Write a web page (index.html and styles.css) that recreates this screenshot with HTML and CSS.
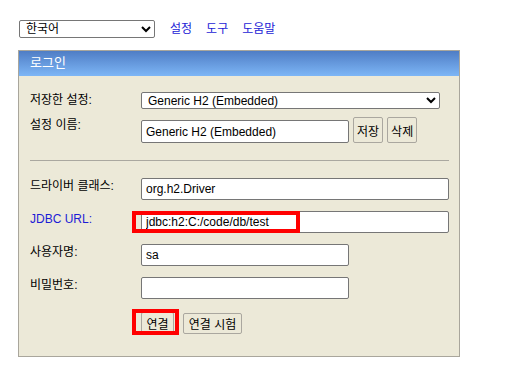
FILE: index.html
```html
<!DOCTYPE html>
<html lang="ko">
<head>
    <meta charset="UTF-8">
    <meta name="viewport" content="width=device-width, initial-scale=1.0">
    <title>H2 Console</title>
    <link rel="stylesheet" href="styles.css">
</head>
<body>
    <div class="toolbar">
        <select class="lang-select">
            <option>한국어</option>
        </select>
        <a href="#" class="top-link">설정</a>
        <a href="#" class="top-link">도구</a>
        <a href="#" class="top-link">도움말</a>
    </div>

    <div class="login">
        <div class="login-head">로그인</div>
        <div class="login-body">
            <div class="row">
                <span class="label">저장한 설정:</span>
                <select class="setting-select">
                    <option>Generic H2 (Embedded)</option>
                </select>
            </div>
            <div class="row row-name">
                <span class="label">설정 이름:</span>
                <input type="text" class="field short" value="Generic H2 (Embedded)">
                <button class="btn btn-tall">저장</button>
                <button class="btn btn-tall">삭제</button>
            </div>

            <hr class="divider">

            <div class="row row-field">
                <span class="label">드라이버 클래스:</span>
                <input type="text" class="field wide" value="org.h2.Driver">
            </div>
            <div class="row row-field">
                <a href="#" class="label label-link">JDBC URL:</a>
                <input type="text" class="field wide" value="jdbc:h2:C:/code/db/test">
            </div>
            <div class="row row-field">
                <span class="label">사용자명:</span>
                <input type="text" class="field short" value="sa">
            </div>
            <div class="row row-field">
                <span class="label">비밀번호:</span>
                <input type="password" class="field short">
            </div>
            <div class="row row-buttons">
                <span class="label"></span>
                <button class="btn btn-connect">연결</button>
                <button class="btn btn-test">연결 시험</button>
            </div>
        </div>

        <!-- highlight marks -->
        <div class="mark mark-url"></div>
        <div class="mark mark-connect"></div>
    </div>
</body>
</html>
```

FILE: styles.css
```css
body {
    margin: 0;
    padding: 20px 0 0 18px;
    background-color: #fff;
    font-family: "Liberation Sans", "Noto Sans CJK KR", sans-serif;
    font-size: 12px;
    color: #000;
}

/* top bar */
.toolbar {
    display: flex;
    align-items: center;
    gap: 14px;
    height: 18px;
}

.lang-select {
    margin-left: 1px;
    margin-right: 1px;
    width: 136px;
    height: 18px;
    padding: 0 2px;
    font-family: inherit;
    font-size: 12px;
    border: 1px solid #767676;
    border-radius: 2px;
    background-color: #fff;
}

.top-link {
    color: #1c1cd6;
    text-decoration: none;
    line-height: 14px;
}

/* login panel */
.login {
    position: relative;
    margin-top: 12px;
    width: 440px;
    border: 1px solid #a9a69c;
    background-color: #ece9d8;
}

.login-head {
    height: 25px;
    line-height: 24px;
    padding-left: 11px;
    font-size: 13px;
    color: #fff;
    background: linear-gradient(#4f7dc5, #7db6f6);
}

.login-body {
    padding: 16px 10px 22px 11px;
}

.row {
    display: flex;
    align-items: flex-start;
}

.label {
    width: 111px;
    flex-shrink: 0;
    padding-top: 1px;
    line-height: 14px;
    color: #000;
    text-decoration: none;
}

.label-link {
    color: #1c1cd6;
}

.setting-select {
    width: 299px;
    height: 17px;
    padding: 0 2px;
    font-family: inherit;
    font-size: 12px;
    border: 1px solid #767676;
    border-radius: 2px;
    background-color: #fff;
}

.row-name {
    margin-top: 8px;
    align-items: flex-end;
}

.row-name .label {
    align-self: flex-start;
}

.field {
    box-sizing: border-box;
    height: 22px;
    padding: 0 4px;
    font-family: inherit;
    font-size: 12px;
    border: 1px solid #767676;
    border-radius: 2px;
    background-color: #fff;
}

.row-name .field {
    height: 23px;
    margin-right: 4px;
}

.field.wide {
    width: 308px;
}

.field.short {
    width: 208px;
}

.btn {
    box-sizing: border-box;
    height: 20px;
    margin-right: 4px;
    padding: 0 3px;
    font-family: inherit;
    font-size: 12px;
    color: #000;
    background-color: #ece9d8;
    border: 1px solid #aaa79f;
    border-radius: 2px;
}

.btn-tall {
    height: 26px;
}

.btn-connect {
    width: 33px;
    height: 22px;
    margin-top: -1px;
    margin-right: 9px;
}

.btn-test {
    width: 59px;
    height: 21px;
}

.divider {
    margin: 17px 0 0 0;
    height: 0;
    border: 0;
    border-top: 1px solid #aaa8a0;
    width: 419px;
}

.row-field {
    margin-top: 11px;
}

.divider + .row-field {
    margin-top: 17px;
}

.row-buttons {
    margin-top: 14px;
}

/* red highlight boxes */
.mark {
    position: absolute;
    box-sizing: border-box;
    border: 4px solid #f00;
}

.mark-url {
    left: 113px;
    top: 160px;
    width: 168px;
    height: 22px;
}

.mark-connect {
    left: 113px;
    top: 258px;
    width: 47px;
    height: 26px;
}
```
